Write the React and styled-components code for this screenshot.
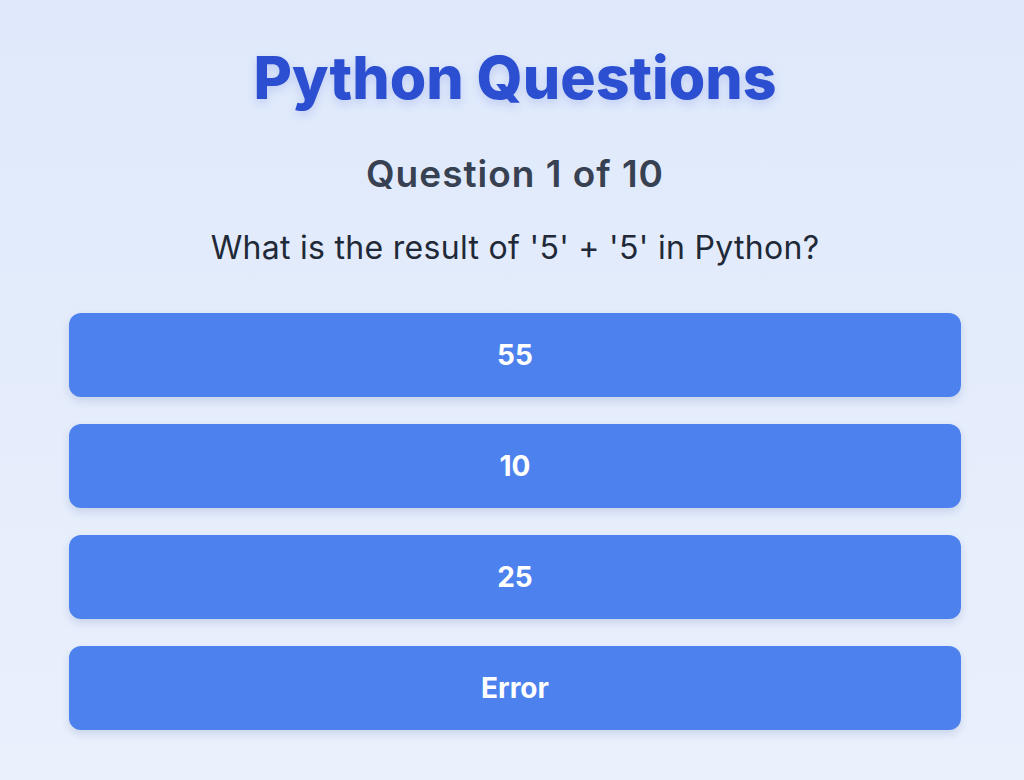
import React from "react";
import styled, { createGlobalStyle } from "styled-components";

const Global = createGlobalStyle`
  html, body { margin: 0; padding: 0; }
  body {
    font-family: Inter, "Noto Sans", sans-serif;
    background: linear-gradient(180deg, #dfe9fb 0%, #eaf0fc 100%);
    min-height: 780px;
  }
`;

const Page = styled.div`
  min-height: 780px;
  padding-left: 6px;
  box-sizing: border-box;
  display: flex;
  justify-content: center;
`;

const Quiz = styled.main`
  width: 892px;
  display: flex;
  flex-direction: column;
  align-items: center;
  padding-top: 40px;
`;

const Title = styled.h1`
  margin: 0;
  font-size: 59px;
  font-weight: 800;
  color: #2b4fd0;
  line-height: 76px;
  text-shadow: 0 4px 10px rgba(43, 79, 208, 0.18);
`;

const Counter = styled.h2`
  margin: 36px 0 0;
  font-size: 37px;
  font-weight: 600;
  letter-spacing: 1px;
  color: #374151;
  line-height: 44px;
`;

const Prompt = styled.p`
  margin: 32px 0 0;
  font-size: 32px;
  font-weight: 400;
  letter-spacing: 0.3px;
  color: #1f2937;
  line-height: 40px;
`;

const Options = styled.div`
  width: 100%;
  margin-top: 45px;
  display: flex;
  flex-direction: column;
  gap: 27px;
`;

const Option = styled.button`
  height: 84px;
  width: 100%;
  border: none;
  border-radius: 12px;
  background: #4d82ee;
  color: #ffffff;
  font-family: Inter, "Noto Sans", sans-serif;
  font-size: 28px;
  font-weight: 700;
  box-shadow: 0 4px 8px rgba(30, 60, 140, 0.15);
  cursor: pointer;
`;

const answers = ["55", "10", "25", "Error"];

export default function App() {
  return (
    <>
      <Global />
      <Page>
        <Quiz>
          <Title>Python Questions</Title>
          <Counter>Question 1 of 10</Counter>
          <Prompt>What is the result of '5' + '5' in Python?</Prompt>
          <Options>
            {answers.map((a) => (
              <Option key={a}>{a}</Option>
            ))}
          </Options>
        </Quiz>
      </Page>
    </>
  );
}
